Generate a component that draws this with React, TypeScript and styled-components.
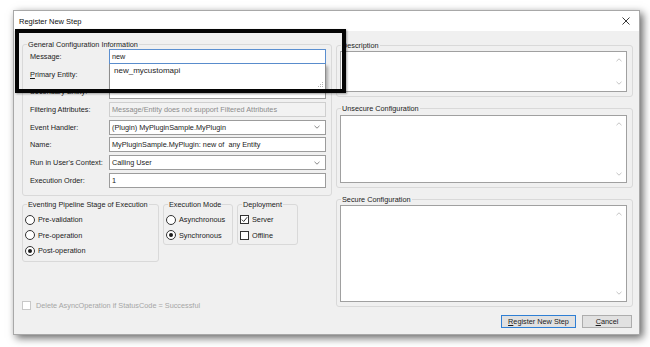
import React from 'react';
import styled, { createGlobalStyle } from 'styled-components';

const GlobalStyle = createGlobalStyle`
  html, body {
    margin: 0;
    padding: 0;
    background: #ffffff;
  }
  body {
    font-family: "Liberation Sans", Arial, sans-serif;
    font-size: 7.3px;
    color: #1b1b1b;
  }
`;

const Page = styled.div`
  width: 650px;
  height: 347px;
  padding: 10px 0 0 13px;
  box-sizing: border-box;
`;

const Window = styled.div`
  position: relative;
  width: 627px;
  height: 325px;
  box-sizing: border-box;
  background: #f0f0f0;
  border: 1px solid #a8a8a8;
  box-shadow: 3px 3px 8px rgba(0, 0, 0, 0.6);
  display: flex;
  flex-direction: column;
`;

const TitleBar = styled.div`
  height: 20px;
  flex: none;
  background: #ffffff;
  display: flex;
  align-items: center;
  justify-content: space-between;
  padding: 0 9px 0 5px;
`;

const Title = styled.span`
  font-size: 7.5px;
  color: #111;
`;

const Body = styled.div`
  flex: 1;
  display: grid;
  grid-template-columns: 310px 297px;
  column-gap: 4px;
  padding: 8.5px 6px 0 8px;
`;

const Column = styled.div`
  display: flex;
  flex-direction: column;
  min-width: 0;
`;

const Group = styled.fieldset<{ $width?: number }>`
  margin: 0;
  padding: 0;
  border: 1px solid #d9d9d9;
  border-radius: 3px;
  min-width: 0;
  width: ${(p) => (p.$width ? `${p.$width}px` : 'auto')};
  box-sizing: border-box;
`;

const Legend = styled.legend`
  margin-left: 4px;
  padding: 0 1px;
  line-height: 9px;
  font-size: 7.3px;
`;

const FormGrid = styled.div`
  display: grid;
  grid-template-columns: 79px 1fr;
  row-gap: 2.7px;
  align-items: center;
  padding: 0.5px 5px 7px 7px;
`;

const Label = styled.span`
  white-space: nowrap;
`;

const Key = styled.span`
  text-decoration: underline;
  text-underline-offset: 1px;
`;

const FieldWrap = styled.div`
  position: relative;
`;

const TextBox = styled.div<{ $focused?: boolean; $disabled?: boolean }>`
  height: 15px;
  box-sizing: border-box;
  border: 1px solid
    ${(p) => (p.$focused ? '#5b8fd0' : p.$disabled ? '#cfcfcf' : '#9c9c9c')};
  background: ${(p) => (p.$disabled ? '#f2f2f2' : '#ffffff')};
  color: ${(p) => (p.$disabled ? '#8c8c8c' : '#1b1b1b')};
  display: flex;
  align-items: center;
  justify-content: space-between;
  padding: 0 5px 0 2px;
  white-space: nowrap;
  overflow: hidden;
`;

const Chevron = styled.svg`
  width: 6px;
  height: 4px;
  flex: none;
`;

const DropList = styled.div`
  position: absolute;
  left: 0;
  right: 0;
  top: 100%;
  height: 26px;
  box-sizing: border-box;
  background: #ffffff;
  border: 1px solid #8d8d8d;
  border-top: none;
  box-shadow: 2px 2px 3px rgba(0, 0, 0, 0.3);
  padding: 2px 4px;
  font-size: 8px;
  z-index: 2;
`;

const Grip = styled.svg`
  position: absolute;
  right: 1px;
  bottom: 1px;
  width: 6px;
  height: 6px;
`;

const StageRow = styled.div`
  display: flex;
  gap: 4px;
  align-items: flex-start;
  margin-top: 4.5px;
`;

const OptionList = styled.div<{ $bottom: number }>`
  display: flex;
  flex-direction: column;
  gap: 0.5px;
  padding: 3px 2px ${(p) => p.$bottom}px 2px;
`;

const Option = styled.div<{ $muted?: boolean }>`
  height: 15px;
  display: flex;
  align-items: center;
  gap: 3px;
  white-space: nowrap;
  color: ${(p) => (p.$muted ? '#a6a6a6' : '#1b1b1b')};
`;

const Radio = styled.span<{ $checked?: boolean }>`
  width: 10px;
  height: 10px;
  box-sizing: border-box;
  border: 1px solid #333333;
  border-radius: 50%;
  background: #ffffff;
  display: flex;
  align-items: center;
  justify-content: center;
  flex: none;

  &::after {
    content: '';
    width: 4px;
    height: 4px;
    border-radius: 50%;
    background: ${(p) => (p.$checked ? '#1b1b1b' : 'transparent')};
  }
`;

const Check = styled.span<{ $muted?: boolean }>`
  width: 9px;
  height: 9px;
  box-sizing: border-box;
  border: 1px solid ${(p) => (p.$muted ? '#c8c8c8' : '#333333')};
  background: #ffffff;
  display: flex;
  align-items: center;
  justify-content: center;
  flex: none;
`;

const DeleteRow = styled(Option)`
  margin-top: 36px;
  gap: 5px;
`;

const RightStack = styled.div`
  display: flex;
  flex-direction: column;
  gap: 7px;
  margin-top: 1px;
`;

const AreaWrap = styled.div`
  padding: 1.5px 5px 4px 3px;
`;

const TextArea = styled.div<{ $h: number }>`
  height: ${(p) => p.$h}px;
  box-sizing: border-box;
  border: 1px solid #a0a0a0;
  background: #ffffff;
  display: flex;
  justify-content: flex-end;
`;

const ScrollBar = styled.div`
  width: 15px;
  display: flex;
  flex-direction: column;
  justify-content: space-between;
  align-items: center;
  padding: 6px 0;
`;

const Buttons = styled.div`
  display: flex;
  justify-content: flex-end;
  gap: 6px;
  margin-top: 8px;
  padding-right: 1px;
`;

const Button = styled.div<{ $width: number; $default?: boolean }>`
  width: ${(p) => p.$width}px;
  height: 13px;
  box-sizing: border-box;
  border: 1px solid ${(p) => (p.$default ? '#2f7fd4' : '#adadad')};
  background: #e1e1e1;
  display: flex;
  align-items: center;
  justify-content: center;
  white-space: nowrap;
`;

const Highlight = styled.div`
  position: absolute;
  left: 1px;
  top: 18px;
  width: 331px;
  height: 64px;
  box-sizing: border-box;
  border: 4px solid #050505;
  box-shadow: 1px 1px 2px rgba(0, 0, 0, 0.35);
  pointer-events: none;
  z-index: 3;
`;

const ChevronDown = () => (
  <Chevron viewBox="0 0 6 4">
    <path d="M0.5 0.8 L3 3.2 L5.5 0.8" fill="none" stroke="#6a6a6a" strokeWidth="0.8" />
  </Chevron>
);

const Arrow = ({ up }: { up?: boolean }) => (
  <Chevron viewBox="0 0 6 4">
    <path
      d={up ? 'M0.5 3.2 L3 0.8 L5.5 3.2' : 'M0.5 0.8 L3 3.2 L5.5 0.8'}
      fill="none"
      stroke="#b4b4b4"
      strokeWidth="0.8"
    />
  </Chevron>
);

const Tick = () => (
  <svg width="7" height="7" viewBox="0 0 7 7">
    <path d="M0.8 3.6 L2.7 5.5 L6.2 1.2" fill="none" stroke="#222" strokeWidth="0.9" />
  </svg>
);

const Area = ({ h }: { h: number }) => (
  <AreaWrap>
    <TextArea $h={h}>
      <ScrollBar>
        <Arrow up />
        <Arrow />
      </ScrollBar>
    </TextArea>
  </AreaWrap>
);

export default function App() {
  return (
    <Page>
      <GlobalStyle />
      <Window>
        <TitleBar>
          <Title>Register New Step</Title>
          <svg width="8" height="8" viewBox="0 0 8 8">
            <path d="M0.5 0.5 L7.5 7.5 M7.5 0.5 L0.5 7.5" stroke="#222" strokeWidth="0.9" />
          </svg>
        </TitleBar>
        <Body>
          <Column>
            <Group>
              <Legend>General Configuration Information</Legend>
              <FormGrid>
                <Label>Message:</Label>
                <FieldWrap>
                  <TextBox $focused>new</TextBox>
                  <DropList>
                    new_mycustomapi
                    <Grip viewBox="0 0 6 6">
                      <g fill="#b5b5b5">
                        <rect x="4" y="0" width="1" height="1" />
                        <rect x="2" y="2" width="1" height="1" />
                        <rect x="4" y="2" width="1" height="1" />
                        <rect x="0" y="4" width="1" height="1" />
                        <rect x="2" y="4" width="1" height="1" />
                        <rect x="4" y="4" width="1" height="1" />
                      </g>
                    </Grip>
                  </DropList>
                </FieldWrap>
                <Label>
                  <Key>P</Key>rimary Entity:
                </Label>
                <TextBox />
                <Label>Secondary Entity:</Label>
                <TextBox />
                <Label>Filtering Attributes:</Label>
                <TextBox $disabled>Message/Entity does not support Filtered Attributes</TextBox>
                <Label>Event Handler:</Label>
                <TextBox>
                  (Plugin) MyPluginSample.MyPlugin
                  <ChevronDown />
                </TextBox>
                <Label>Name:</Label>
                <TextBox>MyPluginSample.MyPlugin: new of&nbsp; any Entity</TextBox>
                <Label>Run in User's Context:</Label>
                <TextBox>
                  Calling User
                  <ChevronDown />
                </TextBox>
                <Label>Execution Order:</Label>
                <TextBox>1</TextBox>
              </FormGrid>
            </Group>

            <StageRow>
              <Group $width={137}>
                <Legend>Eventing Pipeline Stage of Execution</Legend>
                <OptionList $bottom={3}>
                  <Option>
                    <Radio />
                    Pre-validation
                  </Option>
                  <Option>
                    <Radio />
                    Pre-operation
                  </Option>
                  <Option>
                    <Radio $checked />
                    Post-operation
                  </Option>
                </OptionList>
              </Group>
              <Group $width={70}>
                <Legend>Execution Mode</Legend>
                <OptionList $bottom={1.5}>
                  <Option>
                    <Radio />
                    Asynchronous
                  </Option>
                  <Option>
                    <Radio $checked />
                    Synchronous
                  </Option>
                </OptionList>
              </Group>
              <Group $width={61}>
                <Legend>Deployment</Legend>
                <OptionList $bottom={1.5}>
                  <Option>
                    <Check>
                      <Tick />
                    </Check>
                    Server
                  </Option>
                  <Option>
                    <Check />
                    Offline
                  </Option>
                </OptionList>
              </Group>
            </StageRow>

            <DeleteRow $muted>
              <Check $muted />
              Delete AsyncOperation if StatusCode = Successful
            </DeleteRow>
          </Column>

          <Column>
            <RightStack>
              <Group>
                <Legend>Description</Legend>
                <Area h={41} />
              </Group>
              <Group>
                <Legend>Unsecure Configuration</Legend>
                <Area h={68} />
              </Group>
              <Group>
                <Legend>Secure Configuration</Legend>
                <Area h={97} />
              </Group>
            </RightStack>
            <Buttons>
              <Button $width={75} $default>
                <Key>R</Key>egister New Step
              </Button>
              <Button $width={50}>
                <Key>C</Key>ancel
              </Button>
            </Buttons>
          </Column>
        </Body>
        <Highlight />
      </Window>
    </Page>
  );
}
